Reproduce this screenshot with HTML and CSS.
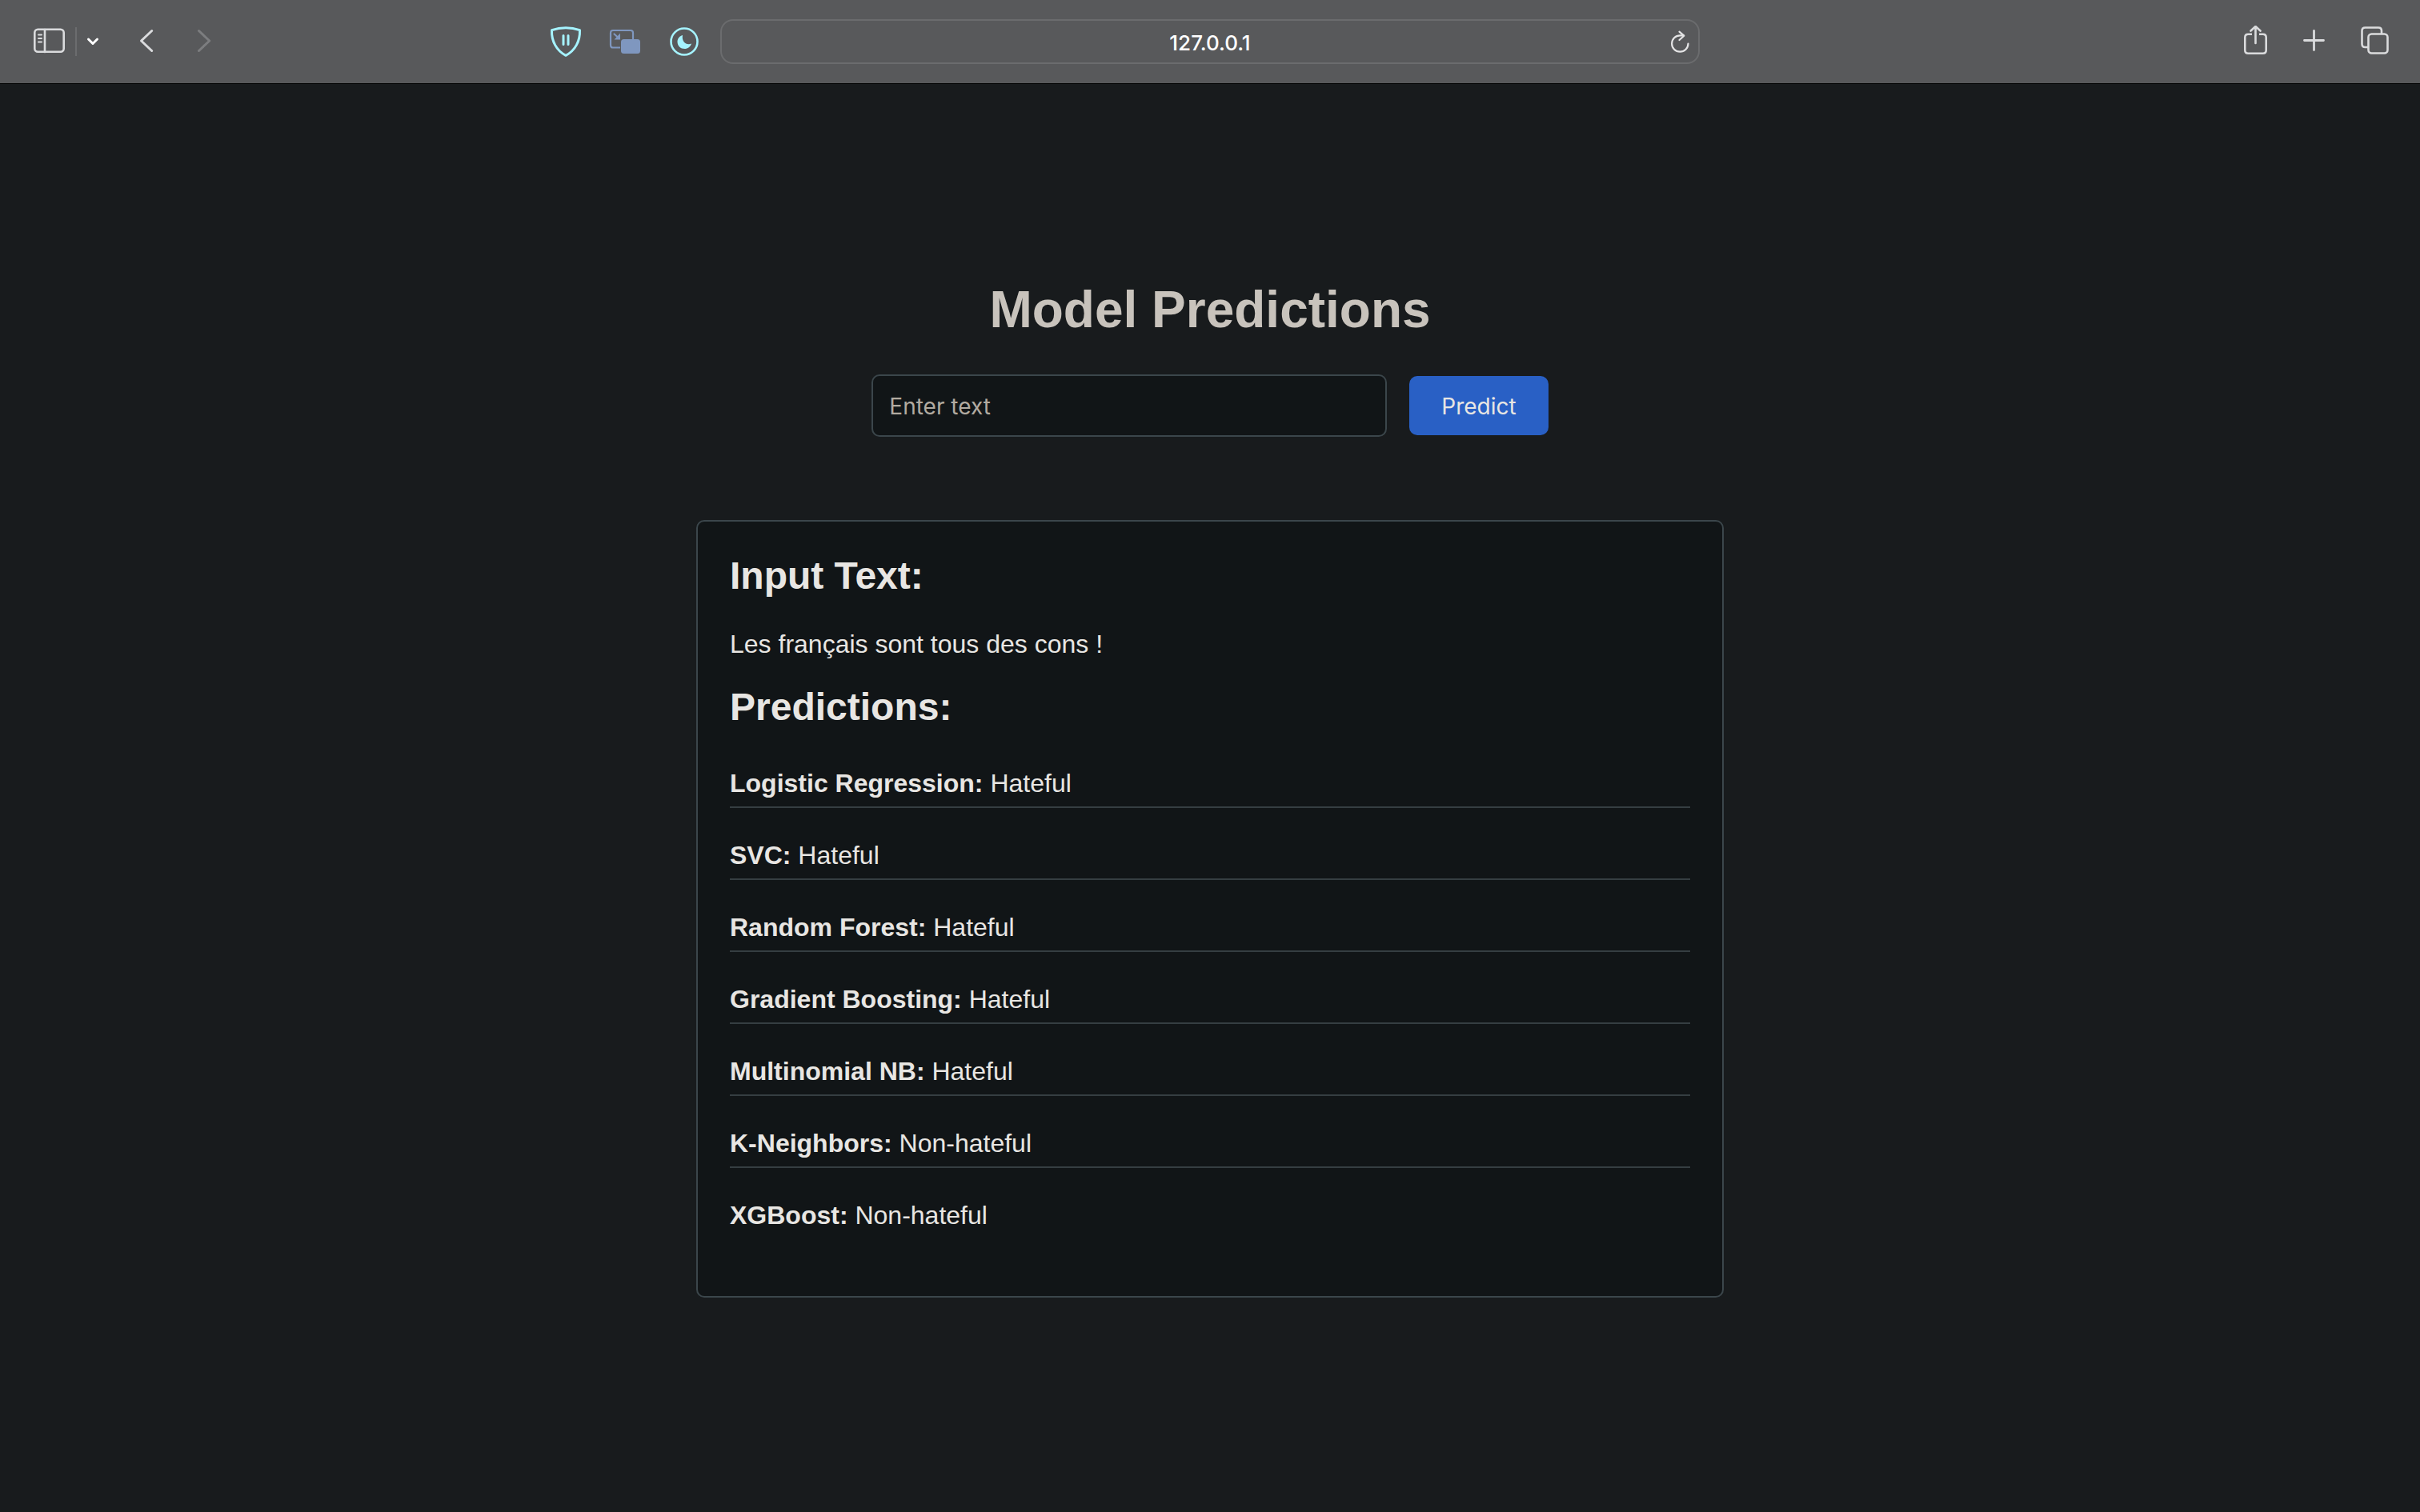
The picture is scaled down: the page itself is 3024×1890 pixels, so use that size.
FILE: index.html
```html
<!DOCTYPE html>
<html lang="en">
<head>
<meta charset="utf-8">
<title>Model Predictions</title>
<link rel="stylesheet" href="styles.css">
</head>
<body>
<header class="toolbar">
  <div class="toolbar-side">
    <div class="nav-group">
      <button class="icon-button" type="button" aria-label="Show sidebar">
        <svg width="40" height="40" viewBox="0 0 40 40" fill="none" stroke="#dadbdd" stroke-width="2.6" stroke-linecap="round">
          <rect x="1.3" y="4.8" width="36.4" height="28" rx="4"/>
          <path d="M14 5v28"/>
          <path d="M6 11.5h4M6 16h4M6 20.500h4" stroke-width="2"/>
        </svg>
      </button>
      <span class="separator"></span>
      <button class="icon-button" type="button" aria-label="Tab groups">
        <svg width="16" height="40" viewBox="0 0 16 40" fill="none" stroke="#fff" stroke-width="3" stroke-linecap="round" stroke-linejoin="round"><path d="M2.500 17l5.500 5.500 5.500-5.500"/></svg>
      </button>
    </div>
    <div class="history-group">
      <button class="icon-button" type="button" aria-label="Back">
        <svg width="18" height="40" viewBox="0 0 18 40" fill="none" stroke="#dadbdd" stroke-width="3" stroke-linecap="round" stroke-linejoin="round"><path d="M15.700 6.500L2.500 19l13.200 12.500"/></svg>
      </button>
      <button class="icon-button" type="button" aria-label="Forward">
        <svg width="18" height="40" viewBox="0 0 18 40" fill="none" stroke="#7c7d7f" stroke-width="3" stroke-linecap="round" stroke-linejoin="round"><path d="M2.500 6.500L15.700 19 2.500 31.500"/></svg>
      </button>
    </div>
    <div class="extensions">
      <button class="icon-button" type="button" aria-label="Content blocker">
        <svg width="40" height="40" viewBox="0 0 40 40" fill="none" stroke="#a5f3ff" stroke-width="3" stroke-linejoin="round">
          <path d="M2.500 5.700Q11 2.800 20 2.800T37.500 5.700C38 19 32 31 20 37.300 8 31 2 19 2.500 5.700z"/>
          <path d="M17 12.500v11M23 12.500v11" stroke-linecap="round"/>
        </svg>
      </button>
      <button class="icon-button" type="button" aria-label="Picture in picture">
        <svg width="40" height="40" viewBox="0 0 40 40" fill="none" stroke="#7f97bf" stroke-width="2.200">
          <path d="M14 27.500H5q-3 0-3-3V9q0-3 3-3h22q3 0 3 3v8"/>
          <rect x="15" y="17" width="24" height="18" rx="3.500" fill="#7f97bf" stroke="none"/>
          <path d="M6.500 10.500l5 4.500" stroke-linecap="round"/>
          <path d="M14 9.500v8H6.500z" fill="#7f97bf" stroke="none"/>
        </svg>
      </button>
      <button class="icon-button" type="button" aria-label="Dark mode">
        <svg width="40" height="40" viewBox="0 0 40 40">
          <circle cx="20" cy="20" r="16.500" fill="none" stroke="#a5f3ff" stroke-width="2.600"/>
          <path d="M18 12C14 13 11.300 16.500 11.500 20.500 11.700 25.500 15.500 29 20.500 29 24.500 29 27.800 26.500 29 22.500 23 25 16.500 20.500 18 12z" fill="#a5f3ff"/>
        </svg>
      </button>
    </div>
  </div>
  <div class="address">
    <input class="address-input" type="text" aria-label="Address" value="127.0.0.1">
    <button class="icon-button" type="button" aria-label="Reload">
      <svg width="32" height="40" viewBox="0 0 32 40" fill="none" stroke="#e4e4e5" stroke-width="2.200" stroke-linecap="round" stroke-linejoin="round">
        <path d="M25.500 22.500a10.200 10.200 0 1 1-10.200-10.200h4.500"/>
        <path d="M14.500 7.700l5.800 5-5.800 5.300"/>
      </svg>
    </button>
  </div>
  <div class="toolbar-side toolbar-actions">
    <button class="icon-button" type="button" aria-label="Share">
      <svg width="36" height="40" viewBox="0 0 36 40" fill="none" stroke="#dadbdd" stroke-width="2.600" stroke-linecap="round" stroke-linejoin="round">
        <path d="M14 10.700H9.300q-4 0-4 4v16q0 4 4 4h18.400q4 0 4-4v-16q0-4-4-4H23" stroke-linecap="butt"/>
        <path d="M18.500 22V1.500M12.500 6.500l6-5.500 6 5.500"/>
      </svg>
    </button>
    <button class="icon-button" type="button" aria-label="New tab">
      <svg width="32" height="40" viewBox="0 0 32 40" fill="none" stroke="#dadbdd" stroke-width="2.800" stroke-linecap="round"><path d="M3.500 18.500h24M15.500 6.500v24"/></svg>
    </button>
    <button class="icon-button" type="button" aria-label="Tab overview">
      <svg width="40" height="40" viewBox="0 0 40 40" fill="none" stroke="#dadbdd" stroke-width="2.600">
        <path d="M11 27H7.500q-4 0-4-4V6.500q0-4 4-4H24q4 0 4 4V10"/>
        <rect x="11.500" y="10.500" width="24" height="24" rx="4"/>
      </svg>
    </button>
  </div>
</header>
<main class="page">
  <h1 class="title">Model Predictions</h1>
  <form class="predict-form">
    <input class="text-input" type="text" name="text" placeholder="Enter text" aria-label="Enter text">
    <button class="predict-button" type="button">Predict</button>
  </form>
  <section class="results">
    <h2 class="results-heading">Input Text:</h2>
    <p class="input-echo" lang="fr">Les français sont tous des cons !</p>
    <h2 class="results-heading">Predictions:</h2>
    <ul class="predictions">
      <li class="prediction"><strong>Logistic Regression:</strong> Hateful</li>
      <li class="prediction"><strong>SVC:</strong> Hateful</li>
      <li class="prediction"><strong>Random Forest:</strong> Hateful</li>
      <li class="prediction"><strong>Gradient Boosting:</strong> Hateful</li>
      <li class="prediction"><strong>Multinomial NB:</strong> Hateful</li>
      <li class="prediction"><strong>K-Neighbors:</strong> Non-hateful</li>
      <li class="prediction"><strong>XGBoost:</strong> Non-hateful</li>
    </ul>
  </section>
</main>
</body>
</html>
```
FILE: styles.css
```css
* {
  box-sizing: border-box;
}

body {
  margin: 0;
  background: #181b1d;
  color: #e8e6e3;
  font-family: "Liberation Sans", Arial, sans-serif;
  font-size: 32px;
  line-height: 38px;
}

/* Browser toolbar */
.toolbar {
  display: grid;
  grid-template-columns: 1fr minmax(0, 1224px) 1fr;
  align-items: center;
  padding: 24px 0;
  background: #58595b;
  border-bottom: 1px solid #020303;
}

.toolbar-side {
  display: flex;
  align-items: center;
}

.nav-group {
  display: flex;
  align-items: center;
  gap: 12px;
  padding-left: 42px;
}

.separator {
  width: 2px;
  height: 36px;
  background: #6b6c6e;
}

.history-group {
  display: flex;
  gap: 54px;
  padding-left: 50px;
}

.extensions {
  display: flex;
  gap: 34px;
  margin-left: auto;
  padding-right: 25px;
}

.toolbar-actions {
  justify-content: flex-end;
  gap: 40px;
  padding-right: 36px;
}

.icon-button {
  display: flex;
  padding: 0;
  border: 0;
  background: none;
}

.address {
  display: flex;
  align-items: center;
  padding: 6px 6px 6px 38px;
  border: 2px solid #6b6c6e;
  border-radius: 16px;
}

.address-input {
  flex: 1;
  min-width: 0;
  height: 40px;
  padding: 2px 0 0;
  border: 0;
  outline: 0;
  background: none;
  color: #fff;
  font: 500 26px Inter, sans-serif;
  text-align: center;
}

/* Page content */
.page {
  display: flex;
  flex-direction: column;
  align-items: center;
  padding: 246px 40px 40px;
}

.title {
  margin: 0 0 45px;
  color: #c8c3bc;
  font-size: 64px;
  line-height: 72px;
}

.predict-form {
  display: flex;
  align-items: center;
  gap: 28px;
  margin-bottom: 104px;
}

.text-input {
  width: 644px;
  height: 78px;
  padding: 2px 20px 0;
  border: 2px solid #3b464b;
  border-radius: 10px;
  outline: 0;
  background: #111517;
  color: #e8e6e3;
  font: 28px Inter, sans-serif;
}

.text-input::placeholder {
  color: #b2aba1;
  opacity: 1;
}

.predict-button {
  padding: 21px 40px 19px;
  border: 0;
  border-radius: 10px;
  background: #2960c5;
  color: #e8e6e3;
  font: 28px/34px Inter, sans-serif;
}

.results {
  width: 100%;
  max-width: 1284px;
  padding: 40px;
  border: 2px solid #3b464b;
  border-radius: 10px;
  background: #111517;
}

.results-heading {
  margin: 0;
  font-size: 48px;
  line-height: 56px;
}

.input-echo {
  margin: 38px 0 32px;
}

.predictions {
  margin: 8px 0 32px;
  padding: 0;
  list-style: none;
}

.prediction {
  padding: 40px 0 10px;
  border-bottom: 2px solid #353e42;
}

.prediction:last-child {
  border-bottom: 0;
}
```
